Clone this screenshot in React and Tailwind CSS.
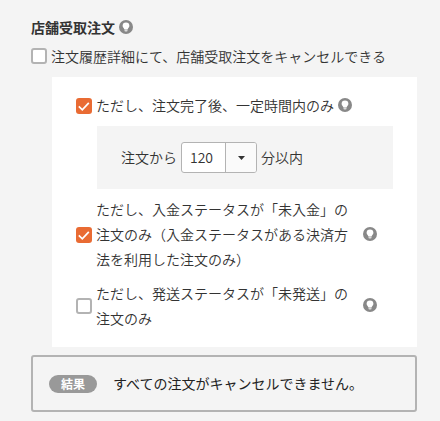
import { useState } from 'react';

function HintIcon() {
  return (
    <svg className="w-3.5 h-3.5 shrink-0" viewBox="0 0 14 14">
      <circle cx="7" cy="7" r="7" fill="#888888" />
      <path
        d="M7 2.4a3.4 3.4 0 0 0-3.4 3.4c0 1.5 1.2 2.2 1.7 3.4h3.4c.5-1.2 1.7-1.9 1.7-3.4A3.4 3.4 0 0 0 7 2.4z"
        fill="#ffffff"
      />
      <path d="M5.5 9.2h3v1.6a.7.7 0 0 1-.7.7H6.2a.7.7 0 0 1-.7-.7z" fill="#dcdcdc" />
    </svg>
  );
}

function Checkbox({ checked, onChange }) {
  return (
    <button
      type="button"
      role="checkbox"
      aria-checked={checked}
      onClick={() => onChange(!checked)}
      className={
        checked
          ? 'w-4 h-4 shrink-0 rounded-[3px] bg-[#e96b33]'
          : 'w-4 h-4 shrink-0 rounded-[3px] border-2 border-[#b3b3b3] bg-white'
      }
    >
      {checked && (
        <svg className="block w-4 h-4" viewBox="0 0 16 16" fill="none" stroke="#ffffff" strokeWidth="1.7">
          <path d="M2.8 8.3l3.5 3.5 6.5-7" />
        </svg>
      )}
    </button>
  );
}

function App() {
  const [cancelable, setCancelable] = useState(false);
  const [timeLimit, setTimeLimit] = useState(true);
  const [unpaid, setUnpaid] = useState(true);
  const [unshipped, setUnshipped] = useState(false);

  return (
    <div className="h-screen overflow-hidden bg-[#f4f4f4] pl-[31px] pr-[23px] pt-[15px] text-sm leading-[25px] text-[#333333] font-[350] font-['Noto_Sans_CJK_JP',sans-serif]">
      <div className="flex items-center h-6">
        <h2 className="font-bold leading-6">店舗受取注文</h2>
        <span className="ml-1">
          <HintIcon />
        </span>
      </div>

      <div className="flex items-center gap-1 mt-[5px] h-6">
        <Checkbox checked={cancelable} onChange={setCancelable} />
        <span>注文履歴詳細にて、店舗受取注文をキャンセルできる</span>
      </div>

      {/* Conditions */}
      <div className="ml-[21px] mt-[9px] h-[270px] bg-white px-6 pt-4">
        <div className="flex items-center gap-1 h-[25px]">
          <Checkbox checked={timeLimit} onChange={setTimeLimit} />
          <span>ただし、注文完了後、一定時間内のみ</span>
          <span className="pb-0.5">
            <HintIcon />
          </span>
        </div>

        <div className="ml-[21px] mt-2 h-[63px] bg-[#f4f4f4] flex items-center pl-6">
          <span>注文から</span>
          <div className="ml-1 mr-1 w-[76px] h-[31px] flex overflow-hidden rounded-[3px] border border-[#b3b3b3] bg-white">
            <span className="w-11 pl-2 leading-[29px] border-r border-[#b3b3b3]">120</span>
            <span className="flex-1 flex items-center justify-center bg-[#fafafa]">
              <svg className="w-[7px] h-1" viewBox="0 0 7 4">
                <path d="M0 0h7L3.5 4z" fill="#333333" />
              </svg>
            </span>
          </div>
          <span>分以内</span>
        </div>

        <div className="flex items-center mt-2 h-[75px]">
          <Checkbox checked={unpaid} onChange={setUnpaid} />
          <p className="ml-1 w-[253px] mr-3.5">
            ただし、入金ステータスが「未入金」の
            <br />
            注文のみ（入金ステータスがある決済方
            <br />
            法を利用した注文のみ）
          </p>
          <span className="pb-0.5">
            <HintIcon />
          </span>
        </div>

        <div className="flex items-center mt-[9px] h-[50px]">
          <Checkbox checked={unshipped} onChange={setUnshipped} />
          <p className="ml-1 w-[253px] mr-3.5">
            ただし、発送ステータスが「未発送」の
            <br />
            注文のみ
          </p>
          <span className="pb-0.5">
            <HintIcon />
          </span>
        </div>
      </div>

      {/* Result */}
      <div className="mt-2 h-[57px] flex items-center gap-4 rounded-[3px] border-2 border-[#b3b3b3] px-4">
        <span className="w-12 h-[18px] rounded-full bg-[#999999] text-center text-xs leading-[18px] font-bold text-white">
          結果
        </span>
        <span className="font-normal text-[#222222]">すべての注文がキャンセルできません。</span>
      </div>
    </div>
  );
}

export default App;
